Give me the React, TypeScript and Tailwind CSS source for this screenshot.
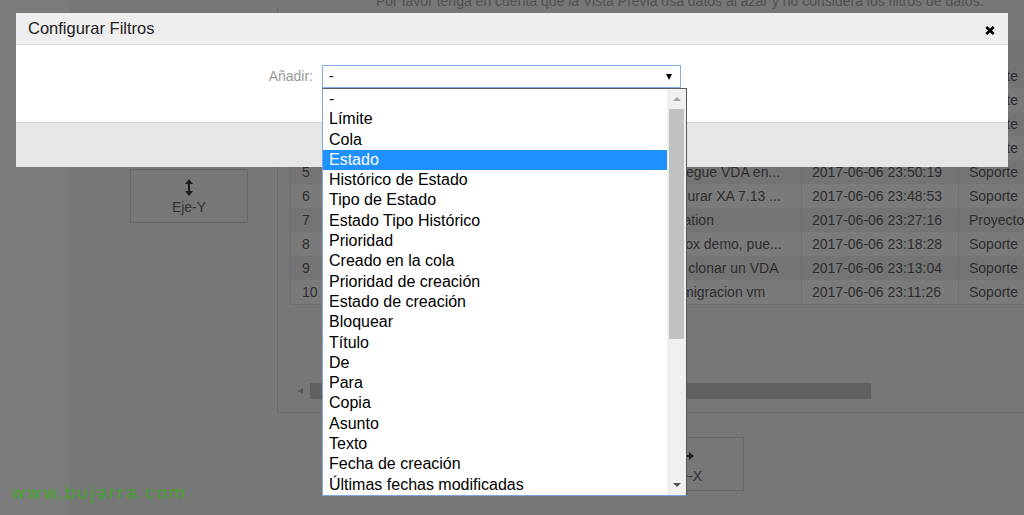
import React from 'react';

const opciones = [
  '-',
  'Límite',
  'Cola',
  'Estado',
  'Histórico de Estado',
  'Tipo de Estado',
  'Estado Tipo Histórico',
  'Prioridad',
  'Creado en la cola',
  'Prioridad de creación',
  'Estado de creación',
  'Bloquear',
  'Título',
  'De',
  'Para',
  'Copia',
  'Asunto',
  'Texto',
  'Fecha de creación',
  'Últimas fechas modificadas',
];

const filas = [
  { n: 1, ticket: '2017060710000012', titulo: 'Revisar licencias...', fecha: '2017-06-07 08:12:40', cola: 'Soporte' },
  { n: 2, ticket: '2017060710000011', titulo: 'Alta de usuario', fecha: '2017-06-07 07:55:02', cola: 'Soporte' },
  { n: 3, ticket: '2017060710000010', titulo: 'Acceso VPN', fecha: '2017-06-07 00:31:47', cola: 'Soporte' },
  { n: 4, ticket: '2017060610000029', titulo: 'Error en backup', fecha: '2017-06-06 23:58:10', cola: 'Soporte' },
  { n: 5, ticket: '2017060610000028', titulo: 'Despliegue VDA en...', fecha: '2017-06-06 23:50:19', cola: 'Soporte' },
  { n: 6, ticket: '2017060610000027', titulo: 'Configurar XA 7.13 ...', fecha: '2017-06-06 23:48:53', cola: 'Soporte' },
  { n: 7, ticket: '2017060610000026', titulo: 'Adaptation', fecha: '2017-06-06 23:27:16', cola: 'Proyecto' },
  { n: 8, ticket: '2017060610000025', titulo: 'Dropbox demo, pue...', fecha: '2017-06-06 23:18:28', cola: 'Soporte' },
  { n: 9, ticket: '2017060610000024', titulo: 'Como clonar un VDA', fecha: '2017-06-06 23:13:04', cola: 'Soporte' },
  { n: 10, ticket: '2017060610000023', titulo: 'Error migracion vm', fecha: '2017-06-06 23:11:26', cola: 'Soporte' },
];

function FlechaVertical() {
  return (
    <svg width="8" height="17" viewBox="0 0 8 17">
      <polygon points="4,0 8,5 0,5" fill="#1f1f1f" />
      <rect x="3" y="4" width="2" height="9" fill="#1f1f1f" />
      <polygon points="4,17 8,12 0,12" fill="#1f1f1f" />
    </svg>
  );
}

function FlechaHorizontal() {
  return (
    <svg width="18" height="8" viewBox="0 0 18 8">
      <polygon points="0,4 5,0 5,8" fill="#1f1f1f" />
      <rect x="4" y="3" width="10" height="2" fill="#1f1f1f" />
      <polygon points="18,4 13,0 13,8" fill="#1f1f1f" />
    </svg>
  );
}

export default function App() {
  return (
    <div className="relative w-[1024px] h-[515px] overflow-hidden bg-[#777777] font-['Liberation_Sans',Arial,sans-serif]">
      {/* pagina de fondo (oscurecida) */}
      <div className="flex h-full">
        <div className="w-[70px] shrink-0 bg-[#7b7b7b]" />
        <div className="flex-1 min-w-0 flex flex-col">
          <div className="h-[8px] pl-[306px]">
            <p className="-mt-[7px] leading-[16px] text-[14px] text-[#505050] whitespace-nowrap">
              Por favor tenga en cuenta que la Vista Previa usa datos al azar y no considera los filtros de datos.
            </p>
          </div>

          <div className="flex">
            <div className="w-[207px] shrink-0 pt-[161px] pl-[60px]">
              <div className="w-[118px] h-[54px] border border-[#686868] flex flex-col items-center pt-[9px]">
                <FlechaVertical />
                <span className="mt-[3px] text-[14px] leading-[16px] text-[#333]">Eje-Y</span>
              </div>
            </div>

            <div className="flex-1 min-w-0 h-[405px] overflow-hidden border-l border-b border-[#6b6b6b] pl-[12px] pt-[32px]">
              <div className="w-[800px] border-l border-b border-[#6e6e6e] text-[14px] leading-[24px] text-[#2e2e2e]">
                <div className="grid grid-cols-[40px_309px_161px_157px_133px] bg-[#727272]">
                  <div className="pl-[11px]">#</div>
                  <div className="pl-[10px]">Ticket#</div>
                  <div className="pl-[7px]">Título</div>
                  <div className="pl-[10px] border-l border-dotted border-[#6a6a6a]">Creado</div>
                  <div className="pl-[10px] border-l border-dotted border-[#6a6a6a]">Cola</div>
                </div>
                {filas.map((f, i) => (
                  <div
                    key={f.n}
                    className={
                      i % 2 === 0
                        ? 'grid grid-cols-[40px_309px_161px_157px_133px] bg-[#747474]'
                        : 'grid grid-cols-[40px_309px_161px_157px_133px] bg-[#7a7a7a]'
                    }
                  >
                    <div className="pl-[11px]">{f.n}</div>
                    <div className="pl-[10px] whitespace-nowrap overflow-hidden">{f.ticket}</div>
                    <div className="pl-[7px] whitespace-nowrap overflow-hidden">{f.titulo}</div>
                    <div className="pl-[10px] whitespace-nowrap border-l border-dotted border-[#6a6a6a]">{f.fecha}</div>
                    <div className="pl-[10px] whitespace-nowrap border-l border-dotted border-[#6a6a6a]">{f.cola}</div>
                  </div>
                ))}
              </div>

              <div className="mt-[78px] h-[16px] flex items-center">
                <div className="ml-[8px] w-0 h-0 border-y-[3.5px] border-r-[5px] border-y-transparent border-r-[#555]" />
                <div className="ml-[7px] w-[561px] h-[16px] bg-[#616161]" />
              </div>
            </div>
          </div>

          <div className="ml-[556px] mt-[24px] w-[118px] h-[54px] border border-[#686868] flex flex-col items-center pt-[14px]">
            <FlechaHorizontal />
            <span className="mt-[8px] text-[14px] leading-[16px] text-[#333]">Eje-X</span>
          </div>
        </div>
      </div>

      {/* marca de agua */}
      <div className="absolute left-[12px] top-[481px] font-['DejaVu_Sans',sans-serif] text-[17px] tracking-[1.8px] text-[#45a32e]">
        www.bujarra.com
      </div>

      {/* ventana modal */}
      <div className="absolute left-[16px] top-[13px] w-[992px] h-[154px] flex flex-col bg-white">
        <div className="h-[32px] bg-[#eeeeee] border-b border-[#dddddd] flex items-center justify-between pl-[12px] pr-[13px]">
          <h2 className="text-[16.5px] text-[#222] leading-none">Configurar Filtros</h2>
          <svg width="10" height="9" viewBox="0 0 10 9" className="mt-[3px]">
            <path d="M1.3 1 L8.7 8 M8.7 1 L1.3 8" stroke="#000" strokeWidth="2.6" />
          </svg>
        </div>
        <div className="h-[77px] flex pt-[20px]">
          <label className="w-[297px] text-right text-[14px] leading-[23px] text-[#999]">Añadir:</label>
          <div className="ml-[9px] w-[359px] h-[23px] border border-[#80acec] flex items-center justify-between pl-[6px] pr-[8px] text-[14px] text-black">
            <span>-</span>
            <div className="w-0 h-0 border-x-[3.5px] border-t-[6px] border-x-transparent border-t-black" />
          </div>
        </div>
        <div className="flex-1 bg-[#e6e6e6] border-t border-[#d4d4d4]" />
      </div>

      {/* lista desplegable abierta */}
      <div className="absolute left-[322px] top-[88px] w-[365px] h-[408px] flex bg-white border-l border-b border-[#7ea6e0] border-t border-t-[#5c5c5c] border-r border-r-[#555]">
        <ul className="flex-1">
          {opciones.map((o) => (
            <li
              key={o}
              className={
                o === 'Estado'
                  ? 'h-[20.3px] leading-[20.3px] pl-[6px] text-[16px] whitespace-nowrap bg-[#1e90ff] text-white'
                  : 'h-[20.3px] leading-[20.3px] pl-[6px] text-[16px] whitespace-nowrap text-black'
              }
            >
              {o}
            </li>
          ))}
        </ul>
        <div className="w-[19px] bg-[#f0f0f0] flex flex-col items-center">
          <div className="h-[20px] flex items-center">
            <div className="w-0 h-0 border-x-[4px] border-b-[4px] border-x-transparent border-b-[#a3a3a3]" />
          </div>
          <div className="w-[15px] h-[230px] bg-[#c1c1c1]" />
          <div className="flex-1" />
          <div className="h-[20px] flex items-center">
            <div className="w-0 h-0 border-x-[4px] border-t-[4px] border-x-transparent border-t-[#505050]" />
          </div>
        </div>
      </div>
    </div>
  );
}
